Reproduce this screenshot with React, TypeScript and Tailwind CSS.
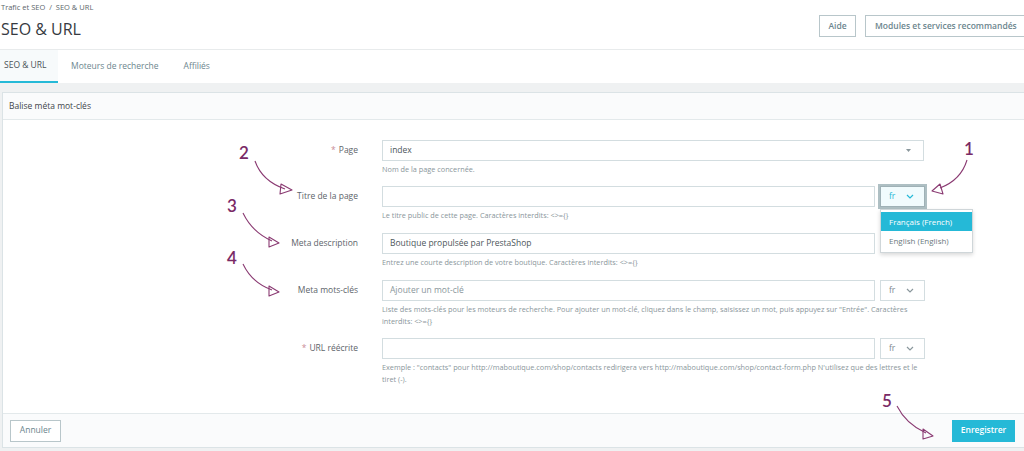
import React from "react";

const Chevron = ({ color }: { color: string }) => (
  <svg width="8" height="5" viewBox="0 0 8 5" className="shrink-0">
    <path d="M1 1 L4 4 L7 1" fill="none" stroke={color} strokeWidth="1.2" />
  </svg>
);

const LangSelect = ({ active }: { active?: boolean }) => (
  <div className="relative ml-[5px] w-[45px] h-[21px]">
    <div
      className={
        active
          ? "w-full h-full flex items-center justify-between pl-[8px] pr-[10px] border border-[#9fb1b6] outline-2 outline-[#aebfc3] bg-[#f1fbfd] text-[#25b9d7] text-[8.5px]"
          : "w-full h-full flex items-center justify-between pl-[8px] pr-[10px] border border-[#d3dde0] bg-white text-[#7d8a90] text-[8.5px]"
      }
    >
      <span>fr</span>
      <Chevron color={active ? "#25b9d7" : "#8a979c"} />
    </div>
    {active && (
      <div className="absolute left-0 top-[23px] w-[93px] bg-white border border-[#cfd6d9] shadow-[0_2px_4px_rgba(0,0,0,0.15)] py-[2px] z-10">
        <div className="h-[19px] flex items-center pl-[8px] bg-[#25b9d7] text-white text-[8px]">
          Français (French)
        </div>
        <div className="h-[19px] flex items-center pl-[8px] text-[#6c7a80] text-[8px]">
          English (English)
        </div>
      </div>
    )}
  </div>
);

const Row = ({
  label,
  required,
  children,
  help,
  mb,
}: {
  label: string;
  required?: boolean;
  children: React.ReactNode;
  help: React.ReactNode;
  mb: string;
}) => (
  <div className={"flex " + mb}>
    <div className="w-[355px] h-[21px] flex items-center justify-end text-[8.5px] text-[#5d646a]">
      {required && <span className="text-[#c98a96] mr-[3px]">*</span>}
      {label}
    </div>
    <div className="ml-[24px]">
      <div className="flex h-[21px]">{children}</div>
      <div className="mt-[2px] text-[7.3px] leading-[12px] text-[#8a969b] whitespace-nowrap">{help}</div>
    </div>
  </div>
);

const Input = ({ w, value, placeholder }: { w: string; value?: string; placeholder?: string }) => (
  <div className={"h-[21px] border border-[#d3dde0] bg-white flex items-center pl-[7px] text-[8.5px] " + w}>
    {value ? (
      <span className="text-[#4d565b]">{value}</span>
    ) : placeholder ? (
      <span className="text-[#8a969b]">{placeholder}</span>
    ) : null}
  </div>
);

export default function App() {
  return (
    <div className="relative w-[1024px] h-[451px] overflow-hidden bg-[#eff1f2] font-['Open_Sans',sans-serif]">
      {/* Header */}
      <div className="bg-white">
        <div className="h-[50px] flex justify-between border-b border-[#e8ebec]">
          <div>
            <div className="pt-[2px] pl-[1px] text-[7.5px] leading-[10px] text-[#5c666b]">
              Trafic et SEO&nbsp;&nbsp;/&nbsp;&nbsp;SEO &amp; URL
            </div>
            <div className="mt-[7px] pl-[1px] text-[16px] leading-[20px] text-[#363a41]">SEO &amp; URL</div>
          </div>
          <div className="flex gap-[9px] mt-[15px] mr-[-3px]">
            <div className="w-[37px] h-[22px] border border-[#b8c6ca] flex items-center justify-center text-[8.5px] font-semibold text-[#6c868e]">
              Aide
            </div>
            <div className="w-[162px] h-[22px] border border-[#b8c6ca] flex items-center pl-[9px] text-[8.5px] font-semibold text-[#6c868e] whitespace-nowrap">
              Modules et services recommandés
            </div>
          </div>
        </div>
        {/* Tabs */}
        <div className="h-[33px] flex items-stretch text-[8.5px] text-[#6c868e]">
          <div className="w-[58px] bg-[#f7fafb] border-b-[2px] border-[#25b9d7] flex items-center pl-[4px] text-[#4a5258]">
            SEO &amp; URL
          </div>
          <div className="flex items-center ml-[13px]">Moteurs de recherche</div>
          <div className="flex items-center ml-[25px]">Affiliés</div>
        </div>
      </div>

      {/* Panel */}
      <div className="mt-[9px] ml-[2px] w-[1024px] border border-[#dbe3e6] bg-white">
        <div className="h-[27px] border-b border-[#e3e9eb] bg-[#fafbfc] flex items-center pl-[6px] text-[8.5px] font-medium text-[#3f454b]">
          Balise méta mot-clés
        </div>
        <div className="pt-[20px] pb-[28px]">
          <Row label="Page" required mb="mb-[11px]" help="Nom de la page concernée.">
            <div className="w-[542px] h-[21px] border border-[#d3dde0] flex items-center justify-between pl-[7px] pr-[12px] text-[8.5px] text-[#4d565b]">
              <span>index</span>
              <svg width="5" height="3" viewBox="0 0 5 3">
                <path d="M0 0 L5 0 L2.5 3 Z" fill="#8a979c" />
              </svg>
            </div>
          </Row>
          <Row
            label="Titre de la page"
            mb="mb-[12px]"
            help="Le titre public de cette page. Caractères interdits: <>={}"
          >
            <Input w="w-[493px]" />
            <LangSelect active />
          </Row>
          <Row
            label="Meta description"
            mb="mb-[12px]"
            help="Entrez une courte description de votre boutique. Caractères interdits: <>={}"
          >
            <Input w="w-[493px]" value="Boutique propulsée par PrestaShop" />
          </Row>
          <Row
            label="Meta mots-clés"
            mb="mb-[11px]"
            help={
              <>
                Liste des mots-clés pour les moteurs de recherche. Pour ajouter un mot-clé, cliquez dans le champ, saisissez un mot, puis appuyez sur "Entrée". Caractères
                <br />
                interdits: &lt;&gt;={"{}"}
              </>
            }
          >
            <Input w="w-[493px]" placeholder="Ajouter un mot-clé" />
            <LangSelect />
          </Row>
          <Row
            label="URL réécrite"
            required
            mb="mb-0"
            help={
              <>
                Exemple : "contacts" pour http://maboutique.com/shop/contacts redirigera vers http://maboutique.com/shop/contact-form.php N'utilisez que des lettres et le
                <br />
                tiret (-).
              </>
            }
          >
            <Input w="w-[493px]" />
            <LangSelect />
          </Row>
        </div>
        {/* Footer */}
        <div className="h-[34px] border-t border-[#e3e9eb] bg-[#fafbfc] flex items-center justify-between pl-[7px] pr-[10px]">
          <div className="w-[51px] h-[22px] border border-[#b8c6ca] bg-white flex items-center justify-center text-[8.5px] text-[#6c868e]">
            Annuler
          </div>
          <div className="w-[63px] h-[22px] bg-[#25b9d7] flex items-center justify-center text-[8.5px] font-semibold text-white">
            Enregistrer
          </div>
        </div>
      </div>

      {/* Annotations */}
      <svg
        className="absolute left-0 top-0 pointer-events-none"
        width="1024"
        height="451"
        viewBox="0 0 1024 451"
      >
        <g fill="none" stroke="#8a3a72" strokeWidth="1.1" strokeLinejoin="round">
          <path d="M255 161 Q262 181 285 189" />
          <polygon points="281,184 292,190 280,194" />
          <path d="M243 213 Q252 232 272 241" />
          <polygon points="269,237 279,243 269,247" />
          <path d="M243 264 Q252 283 272 290" />
          <polygon points="269,286 279,292 269,296" />
          <path d="M967 160 Q961 180 940 188" />
          <polygon points="932,191 940,184 943,194" />
          <path d="M897 406 Q906 424 926 433" />
          <polygon points="923,429 933,436 923,439" />
        </g>
      </svg>
      <div className="absolute left-[964px] top-[140px] text-[17px] leading-none font-semibold text-[#7a2a66] font-['Lato',sans-serif]">1</div>
      <div className="absolute left-[239px] top-[144px] text-[17px] leading-none font-semibold text-[#7a2a66] font-['Lato',sans-serif]">2</div>
      <div className="absolute left-[227px] top-[197px] text-[17px] leading-none font-semibold text-[#7a2a66] font-['Lato',sans-serif]">3</div>
      <div className="absolute left-[227px] top-[249px] text-[17px] leading-none font-semibold text-[#7a2a66] font-['Lato',sans-serif]">4</div>
      <div className="absolute left-[882px] top-[392px] text-[17px] leading-none font-semibold text-[#7a2a66] font-['Lato',sans-serif]">5</div>
    </div>
  );
}
